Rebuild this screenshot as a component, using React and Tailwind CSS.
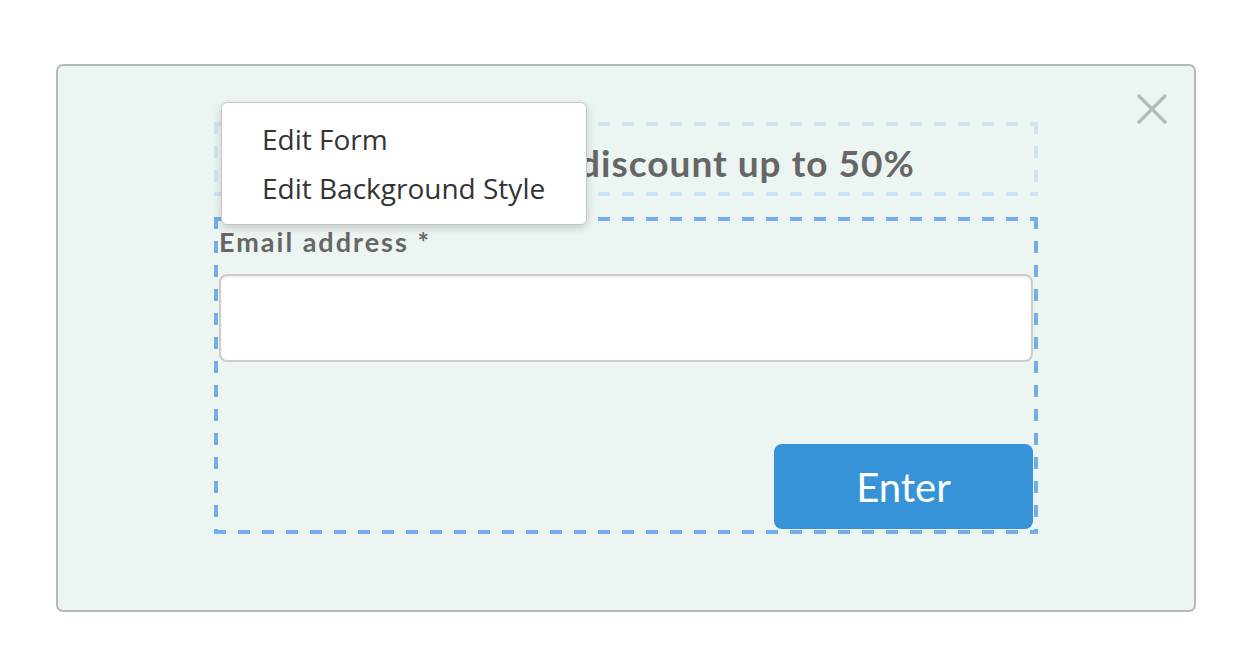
function DashedEdges({ color }) {
    // dashed outline drawn as four striped strips, 12px dash / 12px gap like the editor
    const h = color === 'light'
        ? 'bg-[repeating-linear-gradient(90deg,#cfe3f5_0_12px,transparent_12px_24px)]'
        : 'bg-[repeating-linear-gradient(90deg,#72aeea_0_12px,transparent_12px_24px)]'
    const v = color === 'light'
        ? 'bg-[repeating-linear-gradient(180deg,#cfe3f5_0_12px,transparent_12px_24px)]'
        : 'bg-[repeating-linear-gradient(180deg,#72aeea_0_12px,transparent_12px_24px)]'
    return (
        <>
            <div className={`absolute left-0 right-0 top-0 h-[4px] ${h}`} />
            <div className={`absolute left-0 right-0 bottom-0 h-[4px] ${h}`} />
            <div className={`absolute top-0 bottom-0 left-0 w-[4px] ${v}`} />
            <div className={`absolute top-0 bottom-0 right-0 w-[4px] ${v}`} />
        </>
    )
}

export default function App() {
    return (
        <div className="w-[1246px] h-[660px] bg-white pt-[64px] pl-[56px]">
            {/* popup panel */}
            <div className="relative w-[1140px] h-[548px] rounded-[7px] border-2 border-[#b5bab8] bg-[#edf5f2] pl-[156px] pt-[56px]">
                <button className="absolute right-[26px] top-[27px] w-[32px] h-[32px] flex items-center justify-center">
                    <svg width="30" height="30" viewBox="0 0 30 30">
                        <path d="M2 2 L28 28 M28 2 L2 28" stroke="#b3bbb9" strokeWidth="3.2" strokeLinecap="round" />
                    </svg>
                </button>

                <div className="flex flex-col w-[824px] gap-[21px]">
                    {/* heading */}
                    <div className="relative h-[74px] flex items-start pl-[5px] pt-[22px]">
                        <DashedEdges color="light" />
                        <h1 className="font-['Lato',sans-serif] font-bold text-[37px] tracking-[1px] text-[#666666] leading-none whitespace-nowrap">
                            <span className="tracking-[0.3px]">Register now and get </span>discount up to 50%
                        </h1>
                    </div>

                    {/* form */}
                    <div className="relative h-[317px] flex flex-col p-[4px] pl-[5px]">
                        <DashedEdges color="dark" />
                        <label className="font-['Lato',sans-serif] font-bold text-[27px] tracking-[2px] text-[#666666] leading-none mt-[7px]">
                            Email address *
                        </label>
                        <input
                            type="text"
                            className="mt-[19px] w-[814px] h-[88px] bg-white border-2 border-[#cccccc] rounded-[8px] shadow-[inset_0_2px_3px_rgba(0,0,0,0.06)] outline-none"
                        />
                        <div className="flex-1" />
                        <div className="flex justify-end pr-[1px] pb-[1px]">
                            <button className="w-[259px] h-[85px] rounded-[8px] bg-[#3793d8] text-white font-['Lato',sans-serif] text-[40px] leading-none">
                                Enter
                            </button>
                        </div>
                    </div>
                </div>

                {/* context menu */}
                <div className="absolute left-[163px] top-[36px] w-[366px] h-[123px] bg-white rounded-[6px] border border-[#c8c8c8] shadow-[0_3px_8px_rgba(0,0,0,0.18)] flex flex-col pl-[40px] pt-[22px] gap-[21px]">
                    <div className="font-['Open_Sans',sans-serif] text-[28px] text-[#333333] leading-[28px]">Edit Form</div>
                    <div className="font-['Open_Sans',sans-serif] text-[28px] text-[#333333] leading-[28px]">Edit Background Style</div>
                </div>
            </div>
        </div>
    )
}
